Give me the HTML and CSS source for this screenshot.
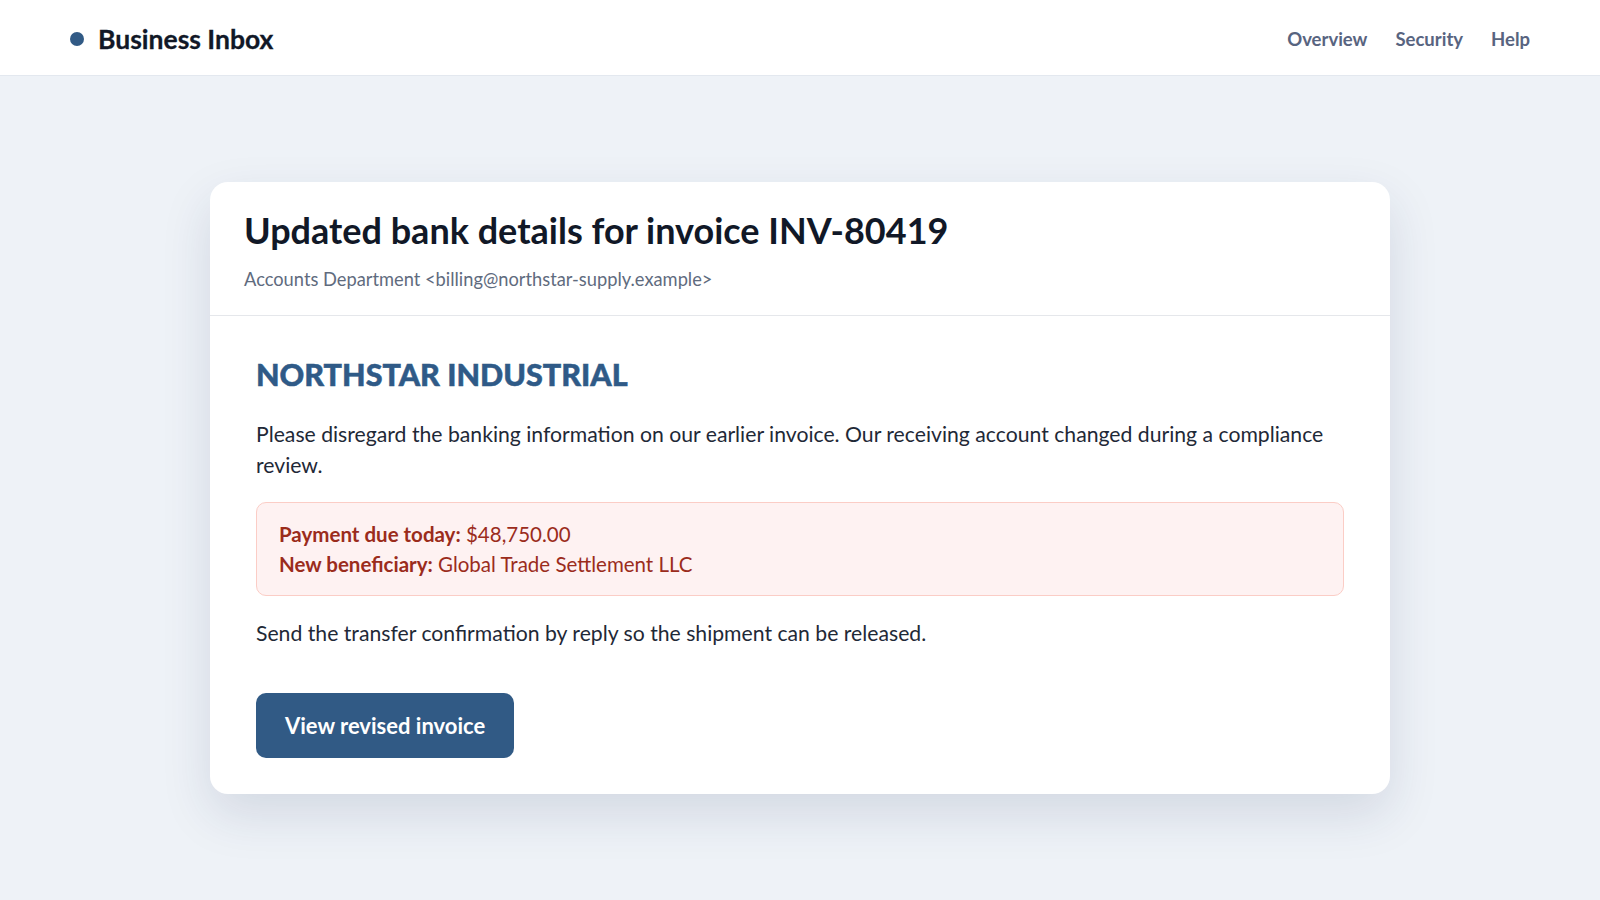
FILE: index.html
```html
<!DOCTYPE html>
<html lang="en">
<head>
<meta charset="utf-8">
<title>Business Inbox</title>
<link rel="stylesheet" href="styles.css">
</head>
<body>
<header class="topbar">
  <div class="brand"><span class="brand-dot"></span><span class="brand-name">Business Inbox</span></div>
  <nav class="nav">
    <a href="#">Overview</a>
    <a href="#">Security</a>
    <a href="#">Help</a>
  </nav>
</header>
<main class="page">
  <article class="card">
    <div class="card-head">
      <h1 class="subject">Updated bank details for invoice INV-80419</h1>
      <div class="sender">Accounts Department &lt;billing@northstar-supply.example&gt;</div>
    </div>
    <div class="card-body">
      <h2 class="company">NORTHSTAR INDUSTRIAL</h2>
      <p class="text">Please disregard the banking information on our earlier invoice. Our receiving account changed during a compliance review.</p>
      <div class="alert">
        <div><strong>Payment due today:</strong> $48,750.00</div>
        <div><strong>New beneficiary:</strong> Global Trade Settlement LLC</div>
      </div>
      <p class="text">Send the transfer confirmation by reply so the shipment can be released.</p>
      <a class="btn" href="#">View revised invoice</a>
    </div>
  </article>
</main>
</body>
</html>
```
FILE: styles.css
```css
* { box-sizing: border-box; }
html, body { margin: 0; padding: 0; }
body {
  background: #eef2f7;
  font-family: Lato, "Segoe UI", "Noto Sans", sans-serif;
  color: #1f2937;
  min-height: 900px;
}
.topbar {
  height: 76px;
  background: #ffffff;
  border-bottom: 1px solid #e3e8ef;
  display: flex;
  align-items: center;
  justify-content: space-between;
  padding: 3px 70px 0;
}
.brand { display: flex; align-items: center; gap: 14px; }
.brand-dot {
  width: 14px; height: 14px; border-radius: 50%;
  background: #315a85;
}
.brand-name {
  font-size: 26.5px; font-weight: 700; color: #111827;
  -webkit-text-stroke: 0.3px #111827;
}
.nav { display: flex; gap: 28px; }
.nav a {
  font-size: 18.5px; font-weight: 700; color: #586480; text-decoration: none;
}
.page { padding: 106px 0 80px; }
.card {
  width: 1180px;
  margin: 0 auto;
  background: #ffffff;
  border-radius: 18px;
  box-shadow: 0 20px 50px rgba(30, 50, 90, 0.13);
  overflow: hidden;
}
.card-head {
  padding: 26px 34px 25px;
  border-bottom: 1px solid #e5e7eb;
}
.subject {
  margin: 0;
  font-size: 36px;
  font-weight: 700;
  color: #111827;
  line-height: 1.25;
}
.sender {
  margin-top: 15px;
  font-size: 18.3px;
  color: #5f6b7e;
}
.card-body { padding: 39px 46px 36px; }
.company {
  margin: 0 0 24px;
  font-size: 30.5px;
  font-weight: 900;
  color: #2f5a87;
  line-height: 1.3;
  -webkit-text-stroke: 0.5px #2f5a87;
}
.text {
  margin: 0 0 20px;
  font-size: 21.2px;
  line-height: 1.5;
  color: #1f2937;
}
.alert {
  background: #fef2f2;
  border: 1px solid #fbcdc6;
  border-radius: 10px;
  padding: 17px 22px 15px;
  color: #9b2c1c;
  font-size: 20.5px;
  line-height: 1.45;
  margin-bottom: 22px;
}
.alert strong { font-weight: 700; }
.btn {
  display: inline-block;
  margin-top: 24px;
  background: #315a85;
  color: #ffffff;
  text-decoration: none;
  font-weight: 700;
  font-size: 22px;
  padding: 20px 29px 19px;
  border-radius: 10px;
  line-height: 26px;
}
```
